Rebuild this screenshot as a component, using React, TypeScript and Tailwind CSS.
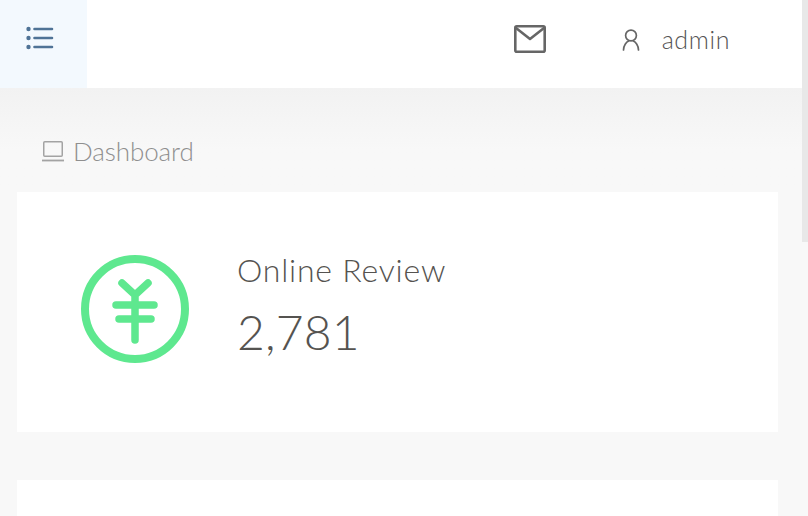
const font = "font-['Lato','Noto_Sans',sans-serif]";

function MenuIcon() {
  return (
    <svg width="28" height="24" viewBox="0 0 28 24" fill="none" stroke="#4f7396" strokeWidth="2.6" strokeLinecap="round">
      <circle cx="2.5" cy="3" r="2.2" fill="#4f7396" stroke="none" />
      <circle cx="2.5" cy="12" r="2.2" fill="#4f7396" stroke="none" />
      <circle cx="2.5" cy="21" r="2.2" fill="#4f7396" stroke="none" />
      <path d="M8.5 3H26M8.5 12H26M8.5 21H26" />
    </svg>
  );
}

function MailIcon() {
  return (
    <svg width="32" height="28" viewBox="0 0 32 28" fill="none" stroke="#666666" strokeWidth="2.6" strokeLinejoin="round" strokeLinecap="round">
      <rect x="1.3" y="1.3" width="29.4" height="25.4" rx="1.5" />
      <path d="M2 3l14 11L30 3" />
    </svg>
  );
}

function UserIcon() {
  return (
    <svg width="18" height="22" viewBox="0 0 18 22" fill="none" stroke="#666666" strokeWidth="1.7" strokeLinecap="round">
      <circle cx="9" cy="6.5" r="5.4" />
      <path d="M1.5 21c0-4.5 2.8-8 5.2-9M16.5 21c0-4.5-2.8-8-5.2-9" />
    </svg>
  );
}

function LaptopIcon() {
  return (
    <svg width="22" height="21" viewBox="0 0 22 21" fill="none" stroke="#a3a3a3" strokeWidth="1.5">
      <rect x="1.75" y="0.75" width="18.5" height="14.5" rx="1" />
      <path d="M0 19.5h22" strokeWidth="1.8" />
    </svg>
  );
}

function YuanIcon() {
  return (
    <svg width="108" height="108" viewBox="0 0 108 108" fill="none" stroke="#5ee88f" strokeLinecap="round" strokeLinejoin="round">
      <circle cx="54" cy="54" r="50" strokeWidth="8" />
      <path d="M41 28l13 12 13-12M54 40v45M35 50h38M38 64h32" strokeWidth="7.5" />
    </svg>
  );
}

export default function App() {
  return (
    <div className={`${font} relative h-[516px] overflow-hidden bg-[#f8f8f8]`}>
      <header className="flex h-[88px] items-start bg-white">
        <div className="flex h-full w-[87px] items-start justify-center bg-[#f3f9fe] pr-[8px] pt-[26px]">
          <MenuIcon />
        </div>
        <div className="ml-auto flex items-start pr-[78px] pt-[25px]">
          <MailIcon />
          <div className="ml-[76px] flex items-center pt-[2px]">
            <UserIcon />
            <span className="ml-[22px] text-[25px] font-light leading-none tracking-[0.6px] text-[#555555]">admin</span>
          </div>
        </div>
      </header>

      <div className="bg-gradient-to-b from-[#f2f2f2] to-[#f8f8f8] to-[60%] px-[17px]">
        <div className="flex h-[104px] items-center pl-[25px] pt-[22px]">
          <LaptopIcon />
          <span className="ml-[9px] text-[26px] font-light leading-none tracking-[-0.1px] text-[#8f8f8f]">Dashboard</span>
        </div>
      </div>

      <div className="px-[17px] pr-[30px]">
        <section className="flex h-[240px] items-start bg-white pl-[64px] pt-[63px]">
          <YuanIcon />
          <div className="ml-[48px] -mt-[1px] text-[#555350]">
            <div className="text-[32px] font-light leading-none tracking-[0.8px]">Online Review</div>
            <div className="mt-[22px] text-[48px] font-light leading-none tracking-[0.2px]">2,781</div>
          </div>
        </section>
        <section className="mt-[48px] h-[240px] bg-white" />
      </div>

      <div className="absolute right-0 top-0 h-[242px] w-[6px] bg-[#e8e8e8]" />
    </div>
  );
}
